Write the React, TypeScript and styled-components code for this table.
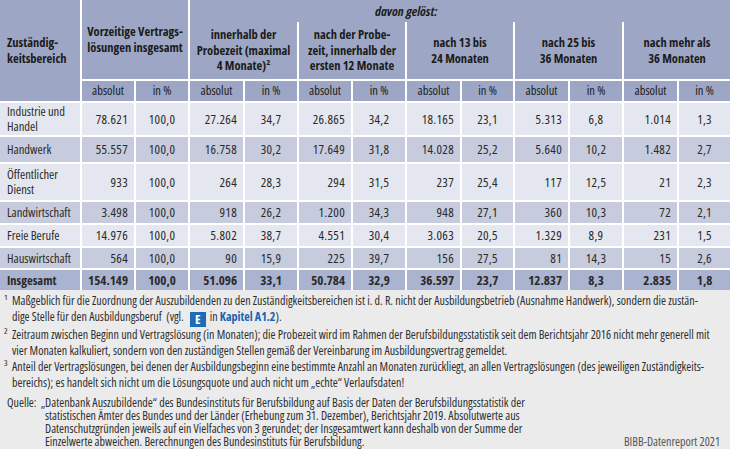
import React from 'react';
import styled, { createGlobalStyle } from 'styled-components';

const FONT = `"Open Sans", "DejaVu Sans Condensed", sans-serif`;

const GlobalStyle = createGlobalStyle`
  html, body { margin: 0; padding: 0; background: #ebebeb; }
  body { font-family: ${FONT}; font-stretch: 75%; color: #2b2b2b; }
`;

type Tone = 'light' | 'dark' | 'total';
type Kind = 'label' | 'abs' | 'pct';

const TONES: Record<Tone, string> = {
  light: '#e4e7ef',
  dark: '#c6ccdd',
  total: '#aab3cf',
};

const HEAD_BG = '#9da7c5';

const Page = styled.div`
  width: 730px;
  height: 449px;
  overflow: hidden;
  background: #ebebeb;
  display: flex;
  flex-direction: column;
  font-family: ${FONT};
  font-stretch: 75%;
`;

const Table = styled.table`
  width: 730px;
  border-collapse: separate;
  border-spacing: 0;
  table-layout: fixed;
  flex: none;
`;

const Col = styled.col<{ $w: number }>`
  width: ${(p) => p.$w}px;
`;

const HeadCell = styled.th<{ $noLeft?: boolean; $topLine?: boolean; $h: number; $left?: boolean; $sub?: boolean }>`
  box-sizing: border-box;
  height: ${(p) => p.$h}px;
  background: ${HEAD_BG};
  color: #1b1b1b;
  font-weight: ${(p) => (p.$sub ? 400 : 700)};
  font-size: 12.5px;
  line-height: 15.5px;
  text-align: ${(p) => (p.$left ? 'left' : 'center')};
  vertical-align: middle;
  padding: ${(p) => (p.$left ? '0 2px 0 7px' : '0 2px')};
  border-left: ${(p) => (p.$noLeft ? '0' : '2px solid #fff')};
  border-top: ${(p) => (p.$topLine ? '2px solid #fff' : '0')};
  white-space: nowrap;
`;

const DavonCell = styled.th`
  box-sizing: border-box;
  height: 22px;
  background: ${HEAD_BG};
  color: #1b1b1b;
  border-left: 2px solid #fff;
  text-align: left;
  vertical-align: bottom;
  padding: 0 0 3px 185px;
  font-style: italic;
  font-weight: 700;
  font-size: 13px;
  line-height: 15px;
`;

const Cell = styled.td<{ $tone: Tone; $kind: Kind; $bold?: boolean; $h: number }>`
  box-sizing: border-box;
  height: ${(p) => p.$h}px;
  background: ${(p) => TONES[p.$tone]};
  color: #2a2a2a;
  border-top: 2px solid #fff;
  border-left: ${(p) => (p.$kind === 'label' ? '0' : '2px solid #fff')};
  text-align: ${(p) => (p.$kind === 'label' ? 'left' : p.$kind === 'abs' ? 'right' : 'center')};
  padding: ${(p) => (p.$kind === 'label' ? '0 2px 0 7px' : p.$kind === 'abs' ? '0 6px 0 0' : '0')};
  font-size: ${(p) => (p.$kind === 'label' ? '12.5px' : '13px')};
  letter-spacing: ${(p) => (p.$kind === 'label' || p.$bold ? '0' : '0.3px')};
  font-weight: ${(p) => (p.$bold ? 700 : 400)};
  line-height: 15px;
  vertical-align: middle;
  white-space: nowrap;
`;

const Notes = styled.div`
  flex: 1;
  display: flex;
  flex-direction: column;
  padding: 3px 0 0 4px;
  font-size: 12px;
  color: #2e2e2e;
`;

const Note = styled.div`
  display: flex;
  line-height: 16px;
`;

const Mark = styled.span`
  flex: none;
  width: 8px;
`;

const Lines = styled.div`
  display: flex;
  flex-direction: column;
`;

const Line = styled.span`
  display: block;
  white-space: nowrap;
`;

const Badge = styled.span`
  display: inline-block;
  width: 16px;
  height: 15px;
  margin: 0 4px 0 6px;
  background: #1d6cb5;
  color: #fff;
  font-weight: 700;
  font-size: 13px;
  line-height: 15px;
  text-align: center;
  vertical-align: -3px;
`;

const Link = styled.span`
  color: #1a64b0;
  font-weight: 700;
`;

const Source = styled.div`
  display: flex;
  align-items: flex-end;
  margin-top: 5px;
  padding-left: 3px;
  line-height: 13px;
`;

const SourceLabel = styled.span`
  flex: none;
  align-self: flex-start;
  width: 38px;
`;

const SourceText = styled.div`
  flex: 1;
  display: flex;
  flex-direction: column;
`;

const FirstLine = styled.span`
  display: block;
  white-space: nowrap;
  margin-left: -4px;
`;

const Credit = styled.span`
  flex: none;
  margin-right: 10px;
  color: #555;
  white-space: nowrap;
`;

const WIDTHS = [80, 54, 54, 55, 54, 54, 54, 55, 53, 55, 54, 55, 53];

const GROUPS = [
  ['innerhalb der', 'Probezeit (maximal', '4 Monate)²'],
  ['nach der Probe-', 'zeit, innerhalb der', 'ersten 12 Monate'],
  ['nach 13 bis', '24 Monaten'],
  ['nach 25 bis', '36 Monaten'],
  ['nach mehr als', '36 Monaten'],
];

type Row = { label: string[]; vals: string[]; tone: Tone; h: number; bold?: boolean };

const ROWS: Row[] = [
  { label: ['Industrie und', 'Handel'], vals: ['78.621', '100,0', '27.264', '34,7', '26.865', '34,2', '18.165', '23,1', '5.313', '6,8', '1.014', '1,3'], tone: 'light', h: 34 },
  { label: ['Handwerk'], vals: ['55.557', '100,0', '16.758', '30,2', '17.649', '31,8', '14.028', '25,2', '5.640', '10,2', '1.482', '2,7'], tone: 'dark', h: 27 },
  { label: ['Öffentlicher', 'Dienst'], vals: ['933', '100,0', '264', '28,3', '294', '31,5', '237', '25,4', '117', '12,5', '21', '2,3'], tone: 'light', h: 38 },
  { label: ['Landwirtschaft'], vals: ['3.498', '100,0', '918', '26,2', '1.200', '34,3', '948', '27,1', '360', '10,3', '72', '2,1'], tone: 'dark', h: 23 },
  { label: ['Freie Berufe'], vals: ['14.976', '100,0', '5.802', '38,7', '4.551', '30,4', '3.063', '20,5', '1.329', '8,9', '231', '1,5'], tone: 'light', h: 23 },
  { label: ['Hauswirtschaft'], vals: ['564', '100,0', '90', '15,9', '225', '39,7', '156', '27,5', '81', '14,3', '15', '2,6'], tone: 'dark', h: 22 },
  { label: ['Insgesamt'], vals: ['154.149', '100,0', '51.096', '33,1', '50.784', '32,9', '36.597', '23,7', '12.837', '8,3', '2.835', '1,8'], tone: 'total', h: 22, bold: true },
];

const withBreaks = (lines: string[]) =>
  lines.map((l, i) => (
    <React.Fragment key={i}>
      {i > 0 && <br />}
      {l}
    </React.Fragment>
  ));

export default function App() {
  return (
    <Page>
      <GlobalStyle />
      <Table>
        <colgroup>
          {WIDTHS.map((w, i) => (
            <Col key={i} $w={w} />
          ))}
        </colgroup>
        <thead>
          <tr>
            <HeadCell rowSpan={3} $noLeft $left $h={22}>
              {withBreaks(['Zuständig-', 'keitsbereich'])}
            </HeadCell>
            <HeadCell rowSpan={2} colSpan={2} $h={22}>
              {withBreaks(['Vorzeitige Vertrags-', 'lösungen insgesamt'])}
            </HeadCell>
            <DavonCell colSpan={10}>davon gelöst:</DavonCell>
          </tr>
          <tr>
            {GROUPS.map((g, i) => (
              <HeadCell key={i} colSpan={2} $h={57}>
                {withBreaks(g)}
              </HeadCell>
            ))}
          </tr>
          <tr>
            {Array.from({ length: 6 }).flatMap((_, i) => [
              <HeadCell key={`a${i}`} $topLine $h={22} $sub>
                absolut
              </HeadCell>,
              <HeadCell key={`p${i}`} $topLine $h={22} $sub>
                in %
              </HeadCell>,
            ])}
          </tr>
        </thead>
        <tbody>
          {ROWS.map((r, ri) => (
            <tr key={ri}>
              <Cell $tone={r.tone} $kind="label" $bold={r.bold} $h={r.h}>
                {withBreaks(r.label)}
              </Cell>
              {r.vals.map((v, vi) => (
                <Cell key={vi} $tone={r.tone} $kind={vi % 2 === 0 ? 'abs' : 'pct'} $bold={r.bold} $h={r.h}>
                  {v}
                </Cell>
              ))}
            </tr>
          ))}
        </tbody>
      </Table>
      <Notes>
        <Note>
          <Mark>¹</Mark>
          <Lines>
            <Line>
              Maßgeblich für die Zuordnung der Auszubildenden zu den Zuständigkeitsbereichen ist i. d. R. nicht der Ausbildungsbetrieb (Ausnahme Handwerk), sondern die zustän-
            </Line>
            <Line>
              dige Stelle für den Ausbildungsberuf &nbsp;(vgl.<Badge>E</Badge>in <Link>Kapitel A1.2</Link>).
            </Line>
          </Lines>
        </Note>
        <Note>
          <Mark>²</Mark>
          <Lines>
            <Line>
              Zeitraum zwischen Beginn und Vertragslösung (in Monaten); die Probezeit wird im Rahmen der Berufsbildungsstatistik seit dem Berichtsjahr 2016 nicht mehr generell mit
            </Line>
            <Line>
              vier Monaten kalkuliert, sondern von den zuständigen Stellen gemäß der Vereinbarung im Ausbildungsvertrag gemeldet.
            </Line>
          </Lines>
        </Note>
        <Note>
          <Mark>³</Mark>
          <Lines>
            <Line>
              Anteil der Vertragslösungen, bei denen der Ausbildungsbeginn eine bestimmte Anzahl an Monaten zurückliegt, an allen Vertragslösungen (des jeweiligen Zuständigkeits-
            </Line>
            <Line>
              bereichs); es handelt sich nicht um die Lösungsquote und auch nicht um „echte“ Verlaufsdaten!
            </Line>
          </Lines>
        </Note>
        <Source>
          <SourceLabel>Quelle:</SourceLabel>
          <SourceText>
            <FirstLine>
              „Datenbank Auszubildende“ des Bundesinstituts für Berufsbildung auf Basis der Daten der Berufsbildungsstatistik der
            </FirstLine>
            <Line>
              statistischen Ämter des Bundes und der Länder (Erhebung zum 31. Dezember), Berichtsjahr 2019. Absolutwerte aus
            </Line>
            <Line>
              Datenschutzgründen jeweils auf ein Vielfaches von 3 gerundet; der Insgesamtwert kann deshalb von der Summe der
            </Line>
            <Line>Einzelwerte abweichen. Berechnungen des Bundesinstituts für Berufsbildung.</Line>
          </SourceText>
          <Credit>BIBB-Datenreport 2021</Credit>
        </Source>
      </Notes>
    </Page>
  );
}
